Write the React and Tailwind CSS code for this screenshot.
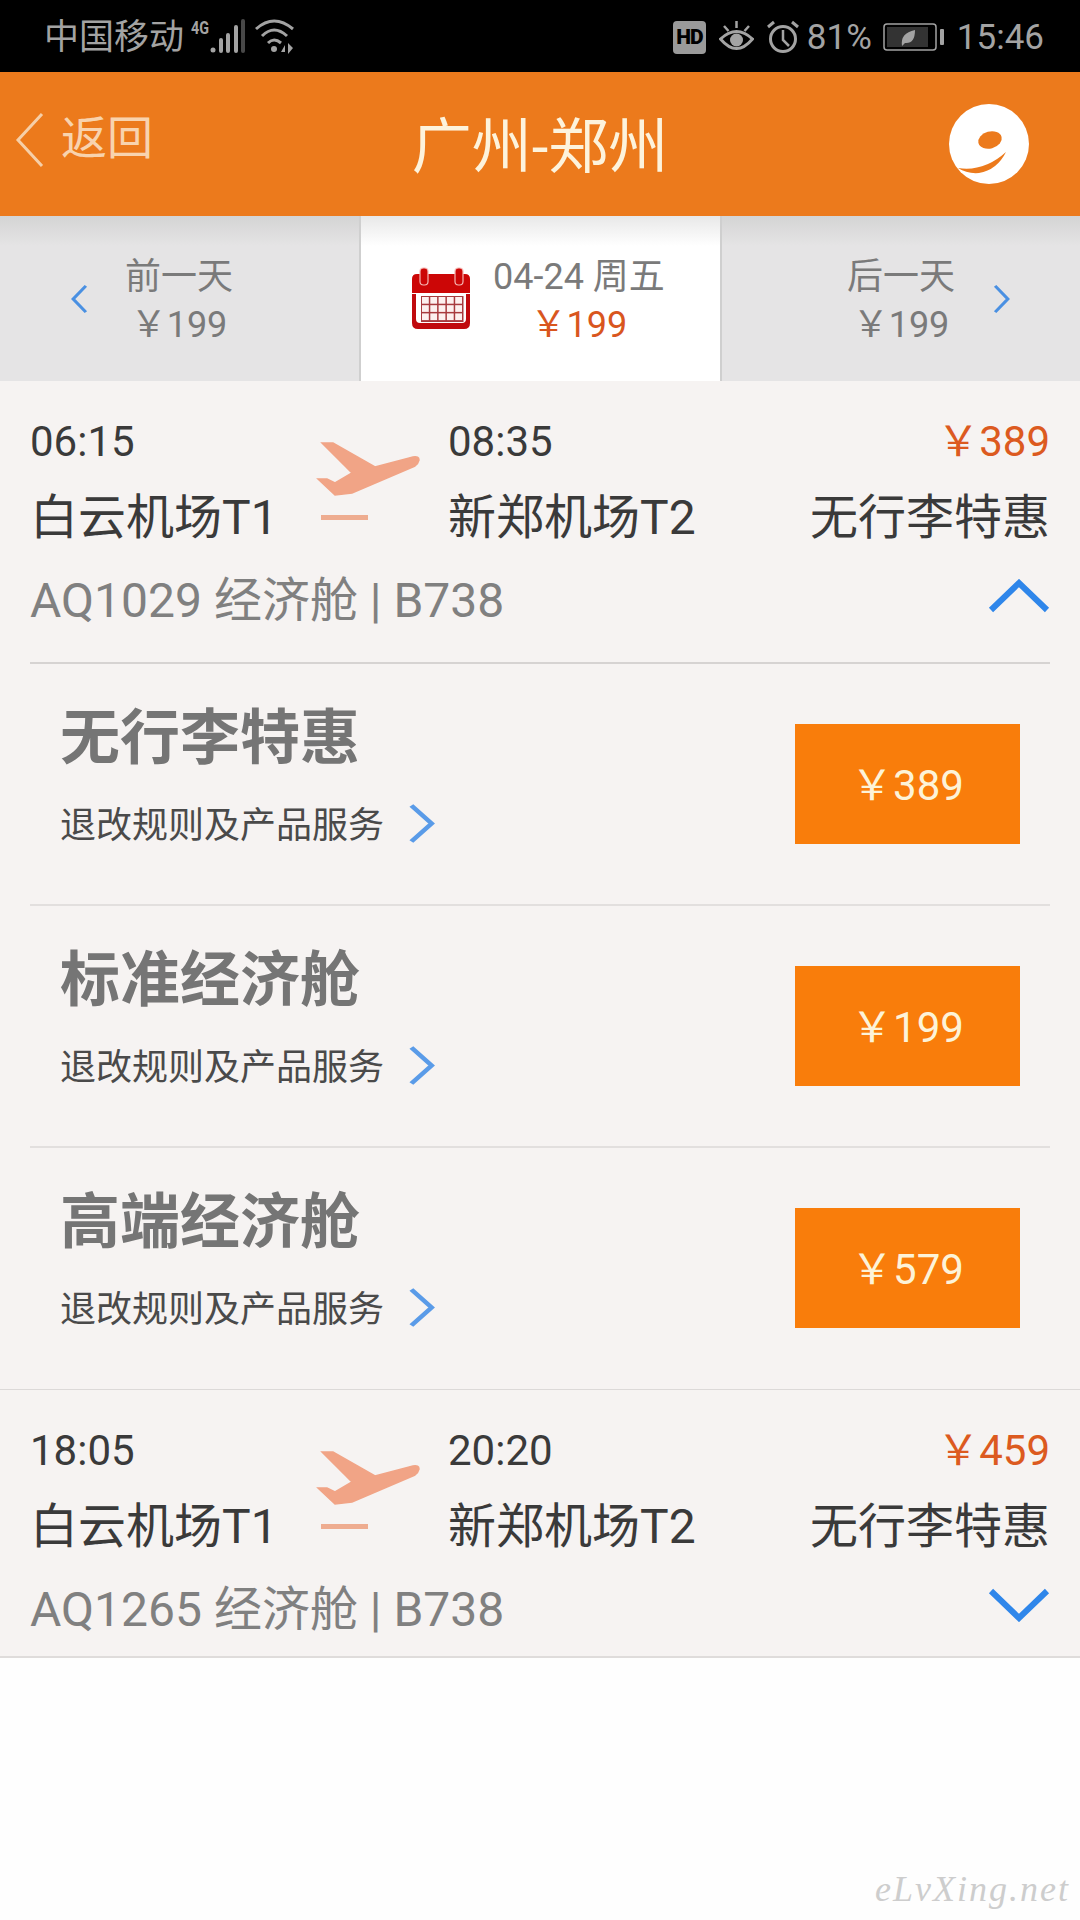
const SANS = "font-['Roboto','Noto_Sans_CJK_SC',sans-serif]";

function Chevron({ dir = "right", className = "", color = "#4a90e2", w = 3 }) {
  const d = {
    right: "M2 2 L14 16 L2 30",
    left: "M14 2 L2 16 L14 30",
  }[dir];
  return (
    <svg viewBox="0 0 16 32" preserveAspectRatio="none" className={className} fill="none">
      <path d={d} stroke={color} strokeWidth={w} />
    </svg>
  );
}

function Plane() {
  return (
    <svg viewBox="0 0 130 100" className="w-[130px] h-[100px] shrink-0 mt-[49px] mr-[18px]">
      <path
        d="M22 13 L33 13 L75 37 L113 27 Q119 26 119 30 Q118 34 115 36 L52 63 L35 65 L18 49 L27 49 L35 53 L52 43 Z"
        fill="#f1a486"
        stroke="#f1a486"
        strokeWidth="1.5"
      />
      <rect x="21" y="85" width="47" height="5" fill="#eeac90" />
    </svg>
  );
}

function Flight({ dep, arr, price, no, up }) {
  return (
    <div className="flex px-[30px] h-[266px]">
      <div className="w-[270px] shrink-0">
        <div className="h-[60px] mt-[31px] text-[42px] leading-[60px] text-[#3a3a3a]">{dep}</div>
        <div className="h-[60px] mt-[16px] text-[48px] leading-[60px] text-[#3a3a3a] whitespace-nowrap">白云机场T1</div>
        <div className="h-[60px] mt-[23px] text-[48px] leading-[60px] text-[#808080] whitespace-nowrap">{no}</div>
      </div>
      <Plane />
      <div className="flex-1">
        <div className="h-[60px] mt-[31px] text-[42px] leading-[60px] text-[#3a3a3a]">{arr}</div>
        <div className="h-[60px] mt-[16px] text-[48px] leading-[60px] text-[#3a3a3a] whitespace-nowrap">新郑机场T2</div>
      </div>
      <div className="text-right">
        <div className="h-[60px] mt-[31px] text-[42px] leading-[60px] text-[#dc5a20]">{price}</div>
        <div className="h-[60px] mt-[16px] text-[48px] leading-[60px] text-[#3a3a3a] whitespace-nowrap">无行李特惠</div>
        <div className="flex justify-end mt-[18px] h-[60px] items-center">
          <svg viewBox="0 0 62 34" className="w-[62px] h-[34px]" fill="none">
            <path d={up ? "M3 31 L31 4 L59 31" : "M3 3 L31 30 L59 3"} stroke="#2f86ea" strokeWidth="6" />
          </svg>
        </div>
      </div>
    </div>
  );
}

function Fare({ name, price, last }) {
  return (
    <div className={`flex items-start mx-[30px] ${last ? "h-[241px]" : "h-[242px] border-b-2 border-[#e2dfde]"}`}>
      <div className="flex-1 pl-[30px] pt-[35px]">
        <div className="text-[60px] leading-[80px] font-bold text-[#757575]">{name}</div>
        <div className="flex items-center mt-[22px] h-[50px]">
          <span className="text-[36px] text-[#4a4a4a]">退改规则及产品服务</span>
          <Chevron className="w-[27px] h-[41px] ml-[24px] -mt-[6px]" color="#5a9be8" w={3} />
        </div>
      </div>
      <button className="w-[225px] h-[120px] mr-[30px] mt-[60px] bg-[#f97d0b] text-[#fdf3d8] text-[42px] pt-[2px]">{price}</button>
    </div>
  );
}

function StatusBar() {
  const g = "#a3a3a3";
  return (
    <div className="h-[72px] bg-black flex items-center justify-between pl-[44px] pr-[36px] text-[#a3a3a3]">
      <div className="flex items-center">
        <span className="text-[35px] leading-none mt-[3px]">中国移动</span>
        <svg viewBox="6 0 124 50" className="w-[124px] h-[50px] ml-[2px]" fill="none">
          <text x="11" y="23" fontSize="18" fontWeight="700" fill={g} textLength="18" lengthAdjust="spacingAndGlyphs">4G</text>
          <circle cx="33" cy="39" r="2.5" fill={g} />
          <path d="M41 29 V40 M48 24 V40 M56 16 V40" stroke={g} strokeWidth="4" strokeLinecap="round" />
          <path d="M63 10 V40" stroke="#484848" strokeWidth="4" strokeLinecap="round" />
          <path d="M76 18 Q94 2 113 18" stroke={g} strokeWidth="3" />
          <path d="M82 25 Q94 13 107 25" stroke={g} strokeWidth="3" />
          <path d="M88 32 Q94 26 101 32" stroke={g} strokeWidth="3" />
          <circle cx="94" cy="38" r="3" fill={g} />
          <path d="M105 34 L101 41 H105 Z M108 32 V43 L113 37 Z" fill={g} />
        </svg>
      </div>
      <div className="flex items-center mt-[2px]">
        <div className="w-[33px] h-[33px] rounded-[4px] bg-[#9a9a9a] text-black text-[21px] font-black leading-[33px] text-center tracking-[-1px]">HD</div>
        <svg viewBox="0 0 35 32" className="w-[35px] h-[32px] ml-[13px]" fill="none" stroke={g}>
          <path d="M1.5 18 Q17.5 3 33.5 18 Q17.5 37 1.5 18 Z" strokeWidth="3" />
          <circle cx="17.5" cy="19" r="6.5" fill={g} stroke="none" />
          <path d="M5 5 L9.5 10 M17.5 0 V7 M30 5 L25.5 10" strokeWidth="2.5" />
        </svg>
        <svg viewBox="0 0 32 34" className="w-[32px] h-[34px] ml-[13px]" fill="none" stroke={g}>
          <circle cx="16" cy="19" r="12.5" strokeWidth="3" />
          <path d="M16 10 V20 L22 26" strokeWidth="2.5" />
          <path d="M1 7 L7 2 M31 7 L25 2" strokeWidth="3" />
        </svg>
        <span className="text-[35px] ml-[8px] leading-none">81%</span>
        <svg viewBox="0 0 62 28" className="w-[62px] h-[28px] ml-[11px]" fill="none">
          <rect x="1" y="1" width="52" height="26" rx="3" stroke={g} strokeWidth="1.5" />
          <rect x="4" y="4" width="41" height="20" fill="#333" />
          <path d="M19 23 Q17 10 32 7 Q32 21 22 20 Z" fill={g} />
          <rect x="57" y="6" width="4" height="16" rx="1" fill={g} />
        </svg>
        <span className="text-[35px] ml-[12px] leading-none">15:46</span>
      </div>
    </div>
  );
}

function Header() {
  return (
    <div className="h-[144px] bg-[#ec7a1c] relative flex items-center justify-center">
      <div className="absolute left-[15px] top-[40px] flex items-center text-[#f8d3ae]">
        <svg viewBox="0 0 30 56" className="w-[30px] h-[56px]" fill="none">
          <path d="M27 2 L3 28 L27 54" stroke="#f6cfa8" strokeWidth="3" />
        </svg>
        <span className="text-[46px] ml-[16px] leading-none -mt-[4px]">返回</span>
      </div>
      <span className="text-[60px] text-[#fdf3dc] leading-none mt-[8px]">广州-郑州</span>
      <svg viewBox="0 0 80 80" className="absolute left-[949px] top-[32px] w-[80px] h-[80px]">
        <circle cx="40" cy="40" r="40" fill="#fff" />
        <ellipse cx="41" cy="36" rx="12" ry="8.5" transform="rotate(-15 41 36)" fill="#ec7a1c" />
        <path d="M9 64 Q35 68 57 48 Q48 66 30 69 Q18 70 9 64 Z" fill="#ec7a1c" />
      </svg>
    </div>
  );
}

function DateTabs() {
  const side = "bg-[linear-gradient(#d4d4d4,#e5e4e5_30px)] flex items-center text-[#7a7a7a]";
  const cells = [];
  for (let r = 0; r < 3; r++) {
    for (let c = 0; c < 5; c++) {
      cells.push(<rect key={`${r}-${c}`} x={22 + c * 8.3} y={36 + r * 8.2} width="6.8" height="6.7" fill="#fdf0ef" />);
    }
  }
  return (
    <div className="h-[165px] flex">
      <div className={`w-[361px] shrink-0 border-r-2 border-[#cfcfcf] pl-[71px] ${side}`}>
        <Chevron dir="left" className="w-[17px] h-[30px]" />
        <div className="ml-[37px] text-center text-[36px] leading-[48px] mt-[5px]">
          <div>前一天</div>
          <div>￥199</div>
        </div>
      </div>
      <div className="w-[359px] bg-[linear-gradient(#e8e8e8,#ffffff_30px)] flex items-center pl-[39px] shrink-0">
        <svg viewBox="0 0 70 75" className="w-[70px] h-[75px] shrink-0">
          <path d="M17 13 H65 Q70 13 70 18 V32 H12 V18 Q12 13 17 13 Z" fill="#cc0606" />
          <path d="M12 33 H16 V58 Q16 62 20 62 H62 Q66 62 66 58 V33 H70 V62 Q70 68 64 68 H18 Q12 68 12 62 Z" fill="#c00a0e" />
          <rect x="20" y="7" width="8" height="17" rx="3.5" fill="#cc0606" stroke="#f5b8b4" strokeWidth="1.2" />
          <rect x="55" y="7" width="8" height="17" rx="3.5" fill="#cc0606" stroke="#f5b8b4" strokeWidth="1.2" />
          <rect x="21" y="35" width="42.5" height="26" fill="#a83a3e" />
          {cells}
        </svg>
        <div className="ml-[23px] text-center text-[36px] leading-[48px] mt-[5px]">
          <div className="text-[#7a7a7a] whitespace-nowrap">04-24 周五</div>
          <div className="text-[#d9561e]">￥199</div>
        </div>
      </div>
      <div className={`flex-1 border-l-2 border-[#cfcfcf] pl-[125px] ${side}`}>
        <div className="text-center text-[36px] leading-[48px] mt-[5px]">
          <div>后一天</div>
          <div>￥199</div>
        </div>
        <Chevron dir="right" className="w-[17px] h-[30px] ml-[38px]" />
      </div>
    </div>
  );
}

export default function App() {
  return (
    <div className={`w-[1080px] h-[1920px] bg-[#fefefe] relative overflow-hidden ${SANS}`}>
      <StatusBar />
      <Header />
      <DateTabs />
      <div className="bg-[#f6f3f2]">
        <Flight dep="06:15" arr="08:35" price="￥389" no="AQ1029 经济舱 | B738" up />
        <div className="h-[15px]" />
        <div className="h-[2px] mx-[30px] bg-[#d6d3d2]" />
        <div className="border-b border-[#dcd9d8]">
          <Fare name="无行李特惠" price="￥389" />
          <Fare name="标准经济舱" price="￥199" />
          <Fare name="高端经济舱" price="￥579" last />
        </div>
        <div className="border-b-2 border-[#dfdcdb]">
          <Flight dep="18:05" arr="20:20" price="￥459" no="AQ1265 经济舱 | B738" />
        </div>
      </div>
      <div className="absolute right-[10px] bottom-[4px] font-['Liberation_Serif',serif] italic text-[36px] tracking-[2px] text-[#cdcdcd]">
        eLvXing.net
      </div>
    </div>
  );
}
